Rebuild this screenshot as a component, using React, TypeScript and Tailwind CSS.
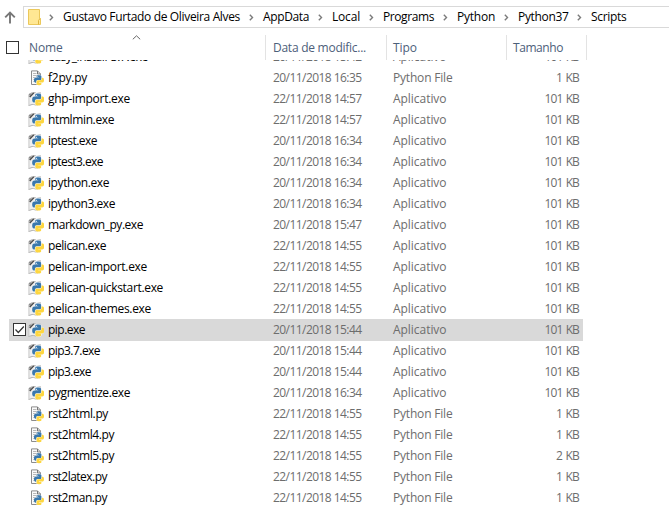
import { useLayoutEffect, useRef, useState } from "react";

type FitProps = { text: string; width: number; className?: string };

/** A single line of text whose tracking is adjusted to fill a given width. */
function Fit({ text, width, className = "" }: FitProps) {
  const ref = useRef<HTMLSpanElement>(null);
  const [spacing, setSpacing] = useState(0);
  useLayoutEffect(() => {
    const el = ref.current;
    if (!el) return;
    el.style.letterSpacing = "0px";
    const gap = (width - el.getBoundingClientRect().width) / text.length;
    el.style.letterSpacing = `${gap}px`;
    setSpacing(gap);
  }, [text, width]);
  return (
    <span ref={ref} className={`inline-block whitespace-nowrap ${className}`} style={{ letterSpacing: `${spacing}px` }}>
      {text}
    </span>
  );
}

const SNAKE =
  "M14.25.18l.9.2.73.26.59.3.45.32.34.34.25.34.16.33.1.3.04.26.02.2-.01.13V8.5l-.05.63-.13.55-.21.46-.26.38-.3.31-.33.25-.35.19-.35.14-.33.1-.3.07-.26.04-.21.02H8.77l-.69.05-.59.14-.5.22-.41.27-.33.32-.27.35-.2.36-.15.37-.1.35-.07.32-.04.27-.02.21v3.06H3.17l-.21-.03-.28-.07-.32-.12-.35-.18-.36-.26-.36-.36-.35-.46-.32-.59-.28-.73-.21-.88-.14-1.05-.05-1.23.06-1.22.16-1.04.24-.87.32-.71.36-.57.4-.44.42-.33.42-.24.4-.16.36-.1.32-.05.24-.01h.16l.06.01h8.16v-.83H6.18l-.01-2.75-.02-.37.05-.34.11-.31.17-.28.25-.26.31-.23.38-.2.44-.18.51-.15.58-.12.64-.1.71-.06.77-.04.84-.02 1.27.05z";

function Snakes({ transform }: { transform: string }) {
  return (
    <g transform={transform}>
      <g fill="none" stroke="#fff" strokeWidth="2">
        <path d={SNAKE} />
        <path d={SNAKE} transform="rotate(180 12 12)" />
      </g>
      <path d={SNAKE} fill="#3a78ad" />
      <path d={SNAKE} fill="#fdd640" transform="rotate(180 12 12)" />
      <circle cx="8.6" cy="3.4" r="1.1" fill="#fff" />
    </g>
  );
}

function ExeIcon() {
  return (
    <svg className="h-4 w-4 shrink-0" viewBox="0 0 16 16">
      <path d="M1 2.500L5 1l4 1 4-1v11l-3 2-4-1-5 2z" fill="#efefef" />
      <path d="M.5 14.500c2-.2 3-1.300 5-1 2 .2 2.500 1 4.500.9" fill="none" stroke="#b0b0b0" />
      <path d="M.9 14V3.500M12.500 5V1.500l-3.500.8" fill="none" stroke="#c4c4c4" strokeWidth=".9" />
      <path d="M.7 3.200l2.500-1.700 3-.6 2.300.6-3.500 1.200L2 5.800.7 6z" fill="#b5b5b5" />
      <path d="M1.800 6L5.800 1.900" stroke="#4a4a4a" strokeWidth="1.300" />
      <path d="M1 3.300h2.200" stroke="#808080" strokeWidth=".9" />
      <Snakes transform="translate(4.200 2.500) scale(.5)" />
    </svg>
  );
}

function PyIcon() {
  return (
    <svg className="h-4 w-4 shrink-0" viewBox="0 0 16 16">
      <path d="M3.500 .9h6l3 3v10.600h-9z" fill="#fafafa" stroke="#8c8c8c" />
      <path d="M9.500 1v3h3" fill="none" stroke="#777" />
      <path d="M5 3.500h3.500M5 5.500h6M5 7.500h5M5 9.500h3M5 11.500h3" stroke="#b0b0b0" strokeWidth=".9" />
      <Snakes transform="translate(6 5.200) scale(.415)" />
    </svg>
  );
}

function Check({ checked = false }: { checked?: boolean }) {
  return (
    <svg className="h-[13px] w-[13px] shrink-0" viewBox="0 0 13 13">
      <rect x=".5" y=".5" width="12" height="12" fill="#fff" stroke="#333" />
      {checked && <path d="M2.500 6.500l2.800 3 5.500-6" fill="none" stroke="#333" strokeWidth="1.200" />}
    </svg>
  );
}

type Row = [name: string, nameWidth: number, date: string, size: string];

const rows: Row[] = [
  ["easy_install-3.7.exe", 100, "20/11/2018 15:42", "101 KB"],
  ["f2py.py", 39, "20/11/2018 16:35", "1 KB"],
  ["ghp-import.exe", 82, "22/11/2018 14:57", "101 KB"],
  ["htmlmin.exe", 66, "22/11/2018 14:57", "101 KB"],
  ["iptest.exe", 49, "20/11/2018 16:34", "101 KB"],
  ["iptest3.exe", 55, "20/11/2018 16:34", "101 KB"],
  ["ipython.exe", 61, "20/11/2018 16:34", "101 KB"],
  ["ipython3.exe", 67, "20/11/2018 16:34", "101 KB"],
  ["markdown_py.exe", 95, "20/11/2018 15:47", "101 KB"],
  ["pelican.exe", 58, "22/11/2018 14:55", "101 KB"],
  ["pelican-import.exe", 99, "22/11/2018 14:55", "101 KB"],
  ["pelican-quickstart.exe", 115, "22/11/2018 14:55", "101 KB"],
  ["pelican-themes.exe", 103, "22/11/2018 14:55", "101 KB"],
  ["pip.exe", 37, "20/11/2018 15:44", "101 KB"],
  ["pip3.7.exe", 52, "20/11/2018 15:44", "101 KB"],
  ["pip3.exe", 43, "20/11/2018 15:44", "101 KB"],
  ["pygmentize.exe", 82, "20/11/2018 16:34", "101 KB"],
  ["rst2html.py", 60, "22/11/2018 14:55", "1 KB"],
  ["rst2html4.py", 66, "22/11/2018 14:55", "1 KB"],
  ["rst2html5.py", 66, "22/11/2018 14:55", "2 KB"],
  ["rst2latex.py", 59, "22/11/2018 14:55", "1 KB"],
  ["rst2man.py", 59, "22/11/2018 14:55", "1 KB"],
];

function FileRow({ row }: { row: Row }) {
  const [name, nameWidth, date, size] = row;
  const script = name.endsWith(".py");
  const selected = name === "pip.exe";
  return (
    <div className={`ml-[9px] flex w-[574px] shrink-0 items-center text-[#6d6d6d] ${selected ? "-mb-px h-[22px] bg-[#d9d9d9] pb-px" : "h-[21px]"}`}>
      <div className="flex w-[19px] shrink-0 pl-1">{selected && <Check checked />}</div>
      <div className="flex w-[245px] shrink-0 items-center gap-1 text-black">
        {script ? <PyIcon /> : <ExeIcon />}
        <Fit text={name} width={nameWidth} />
      </div>
      <div className="flex w-[120px] shrink-0">
        <Fit text={date} width={88.5} />
      </div>
      <div className="flex w-[120px] shrink-0">
        <Fit text={script ? "Python File" : "Aplicativo"} width={script ? 59.5 : 53.5} />
      </div>
      <div className="flex flex-1 justify-end pr-1">
        <Fit text={size} width={size === "101 KB" ? 34.5 : 23} className="[word-spacing:1px]" />
      </div>
    </div>
  );
}

const crumbs: [text: string, textWidth: number, cell: string][] = [
  ["Gustavo Furtado de Oliveira Alves", 177, "w-[200px]"],
  ["AppData", 46, "w-[69px]"],
  ["Local", 28, "w-[51px]"],
  ["Programs", 51, "w-[74px]"],
  ["Python", 38, "w-[61px]"],
  ["Python37", 50.5, "w-[73px]"],
  ["Scripts", 35.5, "w-[36px]"],
];

function Chevron() {
  return (
    <svg className="h-[7px] w-[5px] shrink-0" viewBox="0 0 5 7">
      <path d="M.8.8l2.700 2.700L.8 6.200" fill="none" stroke="#7b7b7b" strokeWidth="1.400" />
    </svg>
  );
}

function AddressBar() {
  return (
    <div className="flex h-[22px] shrink-0">
      <div className="flex w-[23px] shrink-0 items-center pl-1">
        <svg className="h-[13px] w-3" viewBox="0 0 12 13">
          <path d="M6 12.500V2M1.200 6.300L6 1.500l4.800 4.800" fill="none" stroke="#777" strokeWidth="1.900" />
        </svg>
      </div>
      <div className="flex flex-1 items-center border-y border-l border-[#d9d9d9] pl-1 text-black">
        <svg className="-mt-px h-4 w-[13px] shrink-0" viewBox="0 0 13 16">
          <path d="M.5.5h11v9h1v6H.5z" fill="#ffe793" stroke="#ebc85b" />
          <path d="M10.500 15.500v-4l1.500-2" fill="none" stroke="#dfb53e" />
        </svg>
        <div className="flex w-[22px] shrink-0 pl-2">
          <Chevron />
        </div>
        {crumbs.map(([text, width, cell], i) => (
          <div key={text} className={`flex shrink-0 items-center justify-between ${cell}`}>
            <Fit text={text} width={width} />
            {i < crumbs.length - 1 && (
              <div className="pr-[9px]">
                <Chevron />
              </div>
            )}
          </div>
        ))}
      </div>
    </div>
  );
}

function Header() {
  return (
    <div className="flex h-[25px] shrink-0 items-center text-[#4c607a]">
      <div className="flex w-[29px] shrink-0 pl-1.5">
        <Check />
      </div>
      <div className="relative flex h-full w-[237px] shrink-0 items-center border-r border-[#e3e3e3]">
        <Fit text="Nome" width={33.5} />
        <svg className="absolute top-0 left-[103px] h-[5px] w-[9px]" viewBox="0 0 9 5">
          <path d="M.8 4.300L4.500.8l3.700 3.500" fill="none" stroke="#666" />
        </svg>
      </div>
      <div className="ml-px flex h-full w-[120px] shrink-0 items-center border-r border-[#e3e3e3] pl-[6px]">
        <Fit text="Data de modific..." width={93} />
      </div>
      <div className="flex h-full w-[120px] shrink-0 items-center border-r border-[#e3e3e3] pl-[6px]">
        <Fit text="Tipo" width={24} />
      </div>
      <div className="flex h-full w-20 shrink-0 items-center border-r border-[#e3e3e3] pl-[6px]">
        <Fit text="Tamanho" width={50} />
      </div>
    </div>
  );
}

export default function App() {
  return (
    <div className="flex h-[505px] w-[669px] flex-col overflow-hidden bg-white pt-1.5 font-['Open_Sans','Noto_Sans',sans-serif] text-[12px] leading-4">
      <AddressBar />
      <div className="h-[7px] shrink-0" />
      <Header />
      <div className="flex flex-1 flex-col overflow-hidden">
        <div className="-mt-[14px] flex flex-col">
          {rows.map((row) => (
            <FileRow key={row[0]} row={row} />
          ))}
        </div>
      </div>
    </div>
  );
}
